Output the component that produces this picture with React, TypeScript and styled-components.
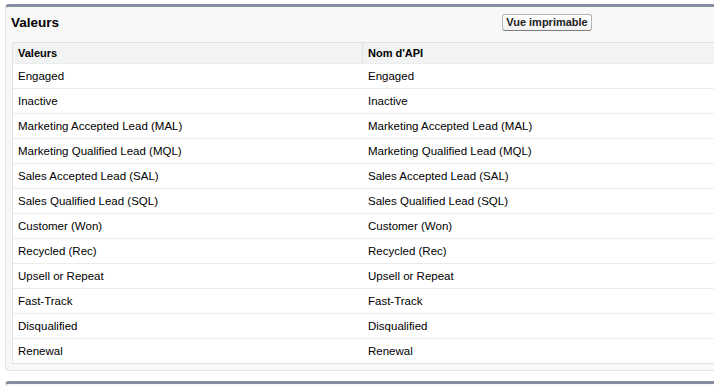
import React from "react";
import styled, { createGlobalStyle } from "styled-components";

const Global = createGlobalStyle`
  html, body { margin: 0; padding: 0; background: #ffffff; overflow: hidden; }
  body { font-family: "Liberation Sans", Arial, Helvetica, sans-serif; color: #000; }
`;

const Page = styled.div`
  width: 714px;
  height: 386px;
  padding: 4px 0 0 5px;
  box-sizing: border-box;
  display: flex;
  flex-direction: column;
  gap: 10px;
`;

const Panel = styled.div`
  width: 730px;
  background: #f8f8f8;
  border-top: 3px solid #868fa0;
  border-left: 1px solid #e2e3e5;
  border-bottom: 1px solid #e2e3e5;
  border-radius: 4px;
  padding: 0 0 6px 6px;
  box-sizing: border-box;
`;

const NextPanel = styled(Panel)`
  height: 20px;
`;

const Header = styled.div`
  height: 35px;
  display: flex;
  align-items: center;
`;

const Title = styled.h2`
  margin: 0 0 4px -1px;
  width: 491px;
  font-size: 13.5px;
  font-weight: bold;
  color: #000;
`;

const Button = styled.button`
  font-family: "Liberation Sans", Arial, sans-serif;
  font-size: 11px;
  font-weight: bold;
  color: #222;
  height: 17px;
  width: 90px;
  padding: 0;
  margin-top: -5px;
  border: 1px solid #b5b5b5;
  border-bottom-color: #7f7f7f;
  border-radius: 3px;
  background: linear-gradient(#ffffff, #f1f1f1);
`;

const Table = styled.div`
  width: 702px;
  border: 1px solid #e0e3e5;
  border-right: none;
  background: #ffffff;
`;

const Row = styled.div<{ $head?: boolean }>`
  display: grid;
  grid-template-columns: 350px 1fr;
  height: ${(p) => (p.$head ? "20px" : "24px")};
  border-bottom: 1px solid #ececec;
  background: ${(p) => (p.$head ? "#f2f3f3" : "#ffffff")};
  font-size: ${(p) => (p.$head ? "11px" : "11.5px")};
  font-weight: ${(p) => (p.$head ? "bold" : "normal")};
  &:last-child { border-bottom: none; }
`;

const Cell = styled.div<{ $head?: boolean; $second?: boolean }>`
  display: flex;
  align-items: center;
  padding-left: 5px;
  border-left: ${(p) => (p.$head && p.$second ? "1px solid #e0e3e5" : "none")};
  margin-left: ${(p) => (p.$head && p.$second ? "-1px" : "0")};
  color: #000;
`;

const values = [
  "Engaged",
  "Inactive",
  "Marketing Accepted Lead (MAL)",
  "Marketing Qualified Lead (MQL)",
  "Sales Accepted Lead (SAL)",
  "Sales Qualified Lead (SQL)",
  "Customer (Won)",
  "Recycled (Rec)",
  "Upsell or Repeat",
  "Fast-Track",
  "Disqualified",
  "Renewal",
];

export default function App() {
  return (
    <>
      <Global />
      <Page>
        <Panel>
          <Header>
            <Title>Valeurs</Title>
            <Button>Vue imprimable</Button>
          </Header>
          <Table>
            <Row $head>
              <Cell $head>Valeurs</Cell>
              <Cell $head $second>Nom d'API</Cell>
            </Row>
            {values.map((v) => (
              <Row key={v}>
                <Cell>{v}</Cell>
                <Cell>{v}</Cell>
              </Row>
            ))}
          </Table>
        </Panel>
        <NextPanel />
      </Page>
    </>
  );
}
